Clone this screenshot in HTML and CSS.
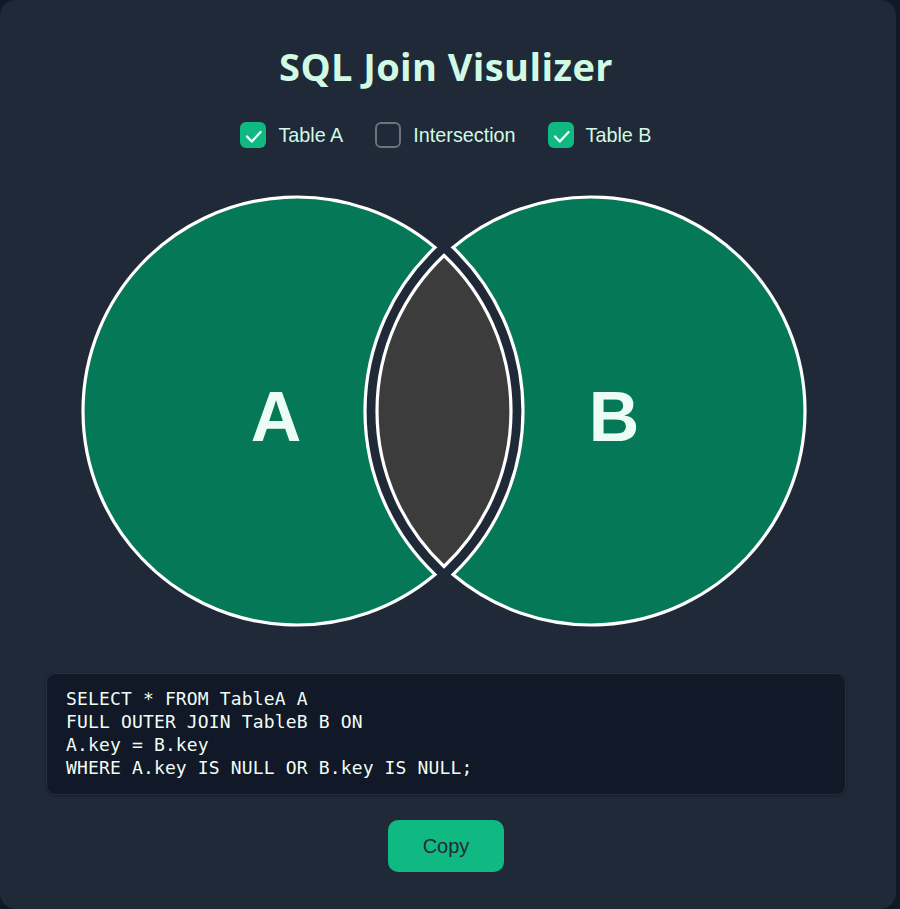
FILE: index.html
```html
<!DOCTYPE html>
<html lang="en">
<head>
<meta charset="utf-8">
<title>SQL Join Visulizer</title>
<link rel="stylesheet" href="styles.css">
</head>
<body>
<main class="card">
  <h1 class="title">SQL Join Visulizer</h1>
  <div class="options">
    <label class="option">
      <span class="box checked"><svg viewBox="0 0 26 26" width="26" height="26"><path d="M7 14.5 L11.8 19.6 L20.6 10" fill="none" stroke="#fff" stroke-width="2.2" stroke-linecap="round" stroke-linejoin="round"/></svg></span>
      <span class="label">Table A</span>
    </label>
    <label class="option">
      <span class="box"></span>
      <span class="label">Intersection</span>
    </label>
    <label class="option">
      <span class="box checked"><svg viewBox="0 0 26 26" width="26" height="26"><path d="M7 14.5 L11.8 19.6 L20.6 10" fill="none" stroke="#fff" stroke-width="2.2" stroke-linecap="round" stroke-linejoin="round"/></svg></span>
      <span class="label">Table B</span>
    </label>
  </div>
  <svg class="venn" viewBox="46 0 800 440" width="800" height="440">
    <path class="part on" d="M435.02 56.46 A214 214 0 1 0 435.02 383.54 A226 226 0 0 1 435.02 56.46 Z"/>
    <path class="part on" d="M452.98 56.46 A214 214 0 1 1 452.98 383.54 A226 226 0 0 0 452.98 56.46 Z"/>
    <path class="part off" d="M444 64.48 A214 214 0 0 1 444 375.52 A214 214 0 0 1 444 64.48 Z"/>
    <text class="letter" x="276" y="250">A</text>
    <text class="letter" x="614" y="250">B</text>
  </svg>
  <pre class="code">SELECT * FROM TableA A
FULL OUTER JOIN TableB B ON
A.key = B.key
WHERE A.key IS NULL OR B.key IS NULL;</pre>
  <button class="copy" type="button">Copy</button>
</main>
</body>
</html>
```
FILE: styles.css
```css
html, body {
  margin: 0;
  padding: 0;
  background: #111827;
}

.card {
  box-sizing: border-box;
  width: 896px;
  height: 909px;
  background: #1f2937;
  border-radius: 16px;
  padding: 46px 50px 37px 46px;
  display: flex;
  flex-direction: column;
  align-items: center;
}

.title {
  margin: 0;
  font-family: "Open Sans", Lato, sans-serif;
  font-weight: 700;
  font-size: 38px;
  letter-spacing: 0.4px;
  line-height: 40px;
  color: #d1fae5;
}

.options {
  margin-top: 35px;
  height: 28px;
  display: flex;
  align-items: center;
  gap: 32px;
}

.option {
  display: flex;
  align-items: center;
  gap: 12px;
}

.box {
  box-sizing: border-box;
  width: 26px;
  height: 26px;
  border-radius: 6px;
  border: 2px solid #6b7280;
  display: block;
}

.box.checked {
  border: none;
  background: #10b981;
}

.box svg {
  display: block;
}

.label {
  font-family: "Liberation Sans", Arial, sans-serif;
  font-size: 19.8px;
  color: #d1fae5;
}

.venn {
  display: block;
  margin-top: 42px;
}

.part {
  stroke: #ffffff;
  stroke-width: 3.2;
}

.part.on {
  fill: #047857;
}

.part.off {
  fill: #3c3c3c;
}

.letter {
  font-family: "Liberation Sans", Arial, sans-serif;
  font-weight: 700;
  font-size: 70px;
  fill: #ecfdf5;
  text-anchor: middle;
}

.code {
  box-sizing: border-box;
  width: 800px;
  height: 122px;
  margin: 42px 0 0 0;
  padding: 13px 20px 15px 19px;
  background: #111827;
  border: 1px solid #243042;
  border-radius: 10px;
  box-shadow: 0 1px 3px rgba(0, 0, 0, 0.35);
  font-family: "DejaVu Sans Mono", monospace;
  font-size: 18px;
  line-height: 23px;
  letter-spacing: 0.15px;
  color: #f0fdf4;
  white-space: pre;
}

.copy {
  margin-top: 25px;
  width: 116px;
  height: 52px;
  border: none;
  border-radius: 10px;
  background: #10b981;
  color: #1f2937;
  font-family: "Liberation Sans", Arial, sans-serif;
  font-size: 20px;
  cursor: pointer;
}
```
